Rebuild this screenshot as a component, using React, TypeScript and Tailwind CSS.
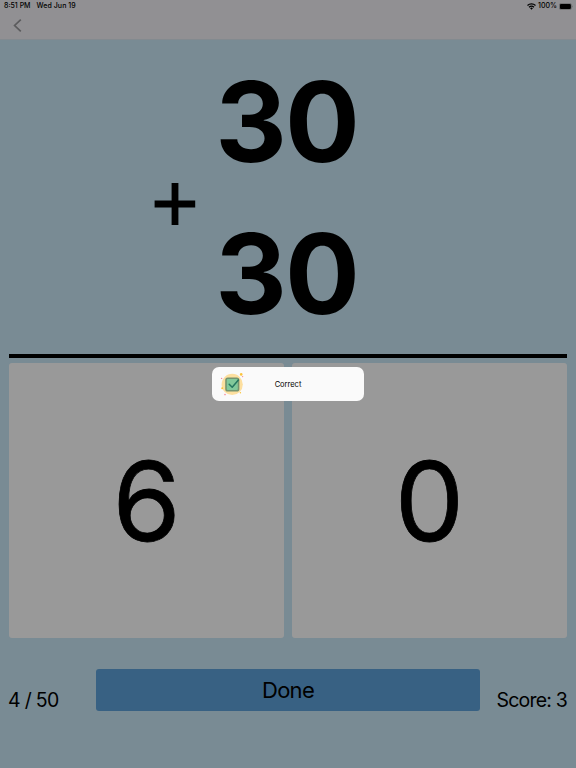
function StatusBar() {
  return (
    <div className="flex h-3 items-center justify-between pl-1 pr-[3px] text-[7px] font-medium leading-3">
      <div className="flex gap-1.5">
        <span>8:51 PM</span>
        <span className="tracking-[0.01em]">Wed Jun 19</span>
      </div>
      <div className="flex items-center gap-0.5">
        <svg width="9" height="7" viewBox="0 0 18 14" fill="none" stroke="black" strokeWidth="2.4">
          <path d="M1 5a11.5 11.5 0 0 1 16 0" />
          <path d="M4 8.4a7.4 7.4 0 0 1 10 0" />
          <path d="M6.2 10.4a4 4 0 0 1 5.6 0L9 13.4z" fill="black" stroke="none" />
        </svg>
        <span>100%</span>
        <svg width="14" height="7" viewBox="0 0 14 7">
          <rect x="0.3" y="0.4" width="12.2" height="6.2" rx="1.8" fill="none" stroke="#555" strokeWidth="0.5" />
          <rect x="0.9" y="1" width="11" height="5" rx="1.1" />
          <path d="M13 2.4q1 1 0 2z" fill="#555" />
        </svg>
      </div>
    </div>
  );
}

function CheckBadge() {
  return (
    <svg width="26" height="26" viewBox="0 0 26 26" fill="none">
      <circle cx="13.2" cy="13.4" r="10.6" fill="#fddf9f" />
      <rect x="7" y="7.3" width="12.6" height="12.4" rx="1.8" fill="#82c99a" stroke="#75946f" strokeWidth="1.6" />
      <path d="m10.2 13.2 3 3 6.2-7.2" stroke="#25765f" strokeWidth="1.5" strokeLinecap="round" strokeLinejoin="round" />
      <circle cx="22.2" cy="3.4" r="1.3" fill="#fbc43c" />
      <circle cx="3.2" cy="17.2" r="1" fill="#fbc43c" />
      <circle cx="21.4" cy="21.8" r="0.7" fill="#fbc43c" />
      <circle cx="2.6" cy="7.4" r="0.7" fill="#f58a9b" />
      <circle cx="23.6" cy="5.6" r="0.7" fill="#f58a9b" />
      <circle cx="6" cy="23.6" r="0.8" fill="#f58a9b" />
    </svg>
  );
}

function Toast({ message }: { message: string }) {
  return (
    <div className="absolute left-[212px] top-[367px] flex h-[34px] w-[152px] items-center justify-center rounded-[7px] bg-[#fafafa] pt-px text-[7.5px]">
      <div className="absolute left-[7px] top-1">
        <CheckBadge />
      </div>
      {message}
    </div>
  );
}

export default function App() {
  return (
    <div className="relative flex h-[768px] w-[576px] flex-col overflow-hidden bg-[#798b94] font-['Inter',sans-serif] text-black">
      <header className="h-10 border-b border-[#838a8f] bg-[#919093]">
        <StatusBar />
        <svg className="ml-3 mt-[7px]" width="12" height="13" viewBox="0 0 12 13" fill="none" stroke="#5b5b5d" strokeWidth="1.7">
          <path d="M8.8 0.7 2.6 6.5l6.2 5.8" />
        </svg>
      </header>

      <section className="grid h-[314px] grid-cols-[1fr_auto_1fr] text-[111px] font-bold leading-[152px] tracking-[-2px]">
        <div className="flex justify-end pr-[22px] pt-[143px]">
          <svg width="42" height="42" viewBox="0 0 42 42" stroke="black" strokeWidth="6.8">
            <path d="M21 0v42M0.6 21h40.6" />
          </svg>
        </div>
        <div className="-ml-[3px] pt-1.5">
          <div>30</div>
          <div>30</div>
        </div>
      </section>
      <div className="mx-[9px] h-[3.5px] bg-black" />
      <main className="mx-[9px] mt-[5.5px] grid h-[275px] grid-cols-2 gap-2 text-[110px] [-webkit-text-stroke:0.8px_black]">
        <div className="flex items-center justify-center rounded-[3px] bg-[#999] pt-px">6</div>
        <div className="flex items-center justify-center rounded-[3px] bg-[#999] pt-px">0</div>
      </main>
      <footer className="mx-[9px] mt-[31px] grid h-[42px] grid-cols-[1fr_384px_1fr] text-[19.5px] tracking-[-0.7px]">
        <span className="-mb-px -ml-px self-end leading-6">4 / 50</span>
        <button className="rounded-[3px] bg-[#386183] pt-px text-[22px]">Done</button>
        <span className="-mb-px self-end justify-self-end leading-6 tracking-[-0.8px]">Score: 3</span>
      </footer>

      <Toast message="Correct" />
    </div>
  );
}
